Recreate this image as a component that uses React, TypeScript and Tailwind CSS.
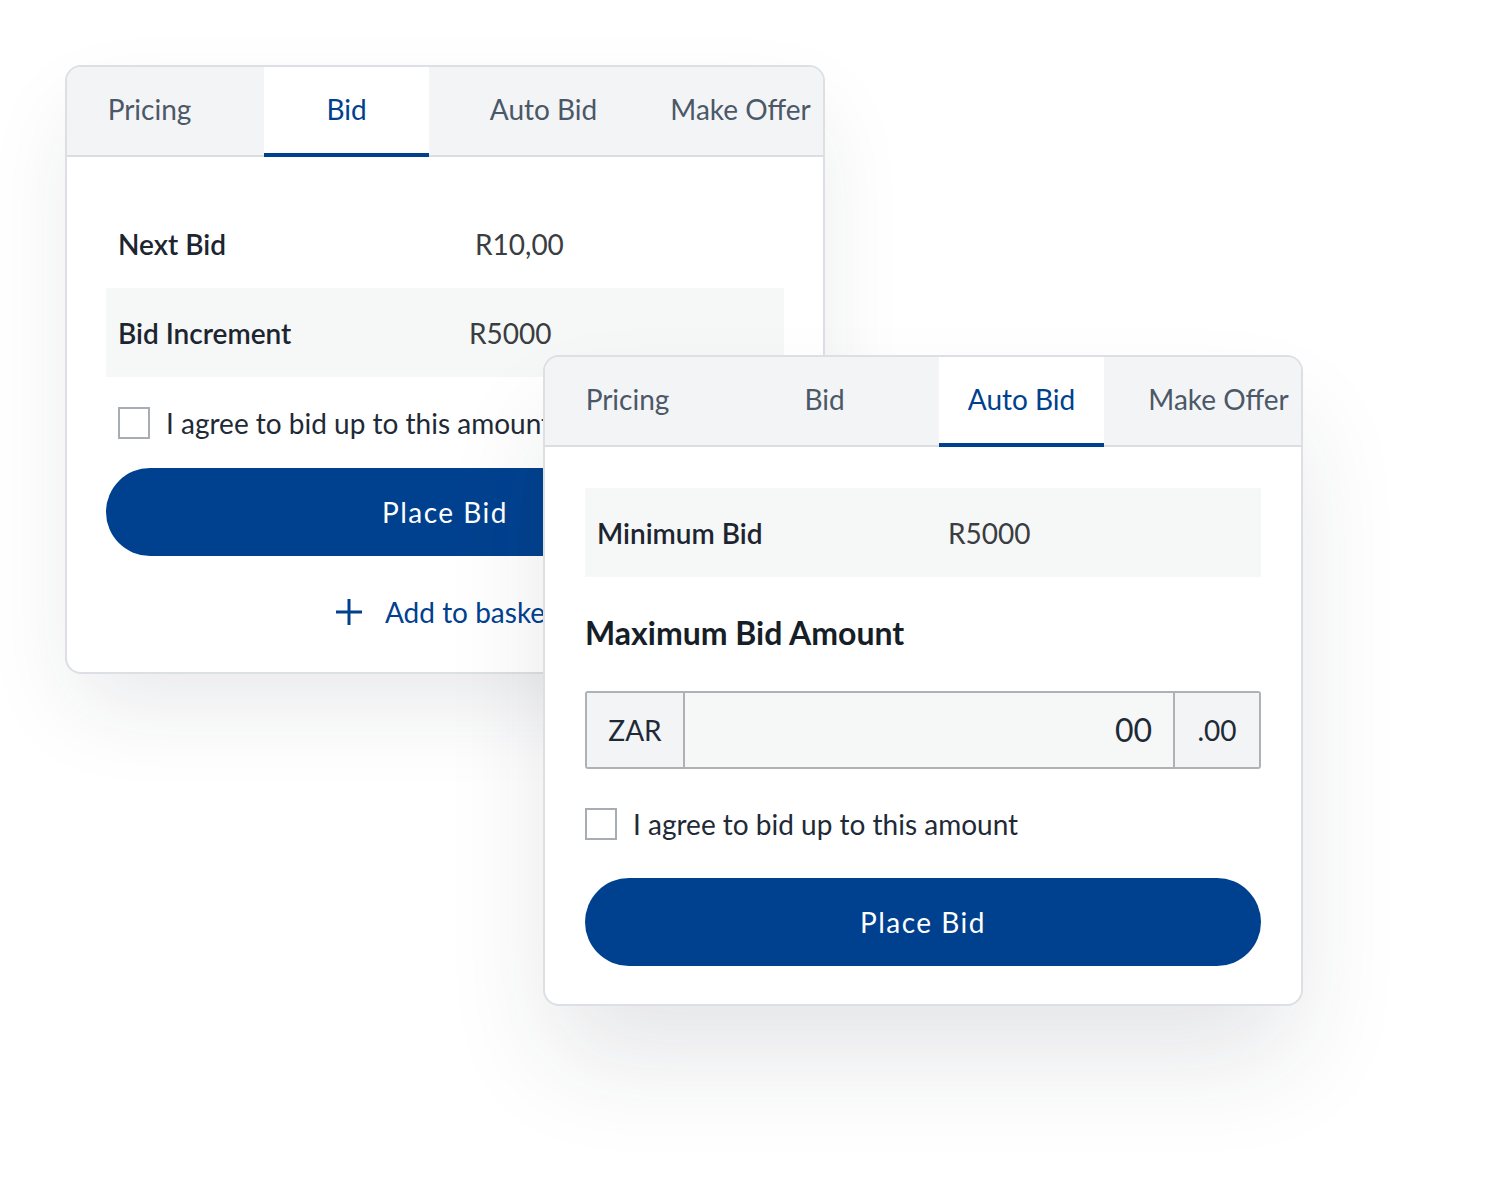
import { useState } from "react";

const TABS = ["Pricing", "Bid", "Auto Bid", "Make Offer"];

function Tabs({ active }: { active: string }) {
  return (
    <div className="flex h-[90px] justify-between rounded-t-[14px] border-b-2 border-[#dadde1] bg-[#f3f4f6]">
      {TABS.map((t) => (
        <div
          key={t}
          className={
            t === active
              ? "relative flex w-[165px] items-center justify-center bg-white pb-[4px] text-[28px] text-[#00418f]"
              : "flex w-[165px] items-center justify-center pb-[4px] text-[28px] text-[#4b5867]"
          }
        >
          {t}
          {t === active && (
            <span className="absolute bottom-[-2px] left-0 right-0 h-1 bg-[#00418f]" />
          )}
        </div>
      ))}
    </div>
  );
}

function Row({
  label,
  value,
  shaded,
  valueOffset = 0,
}: {
  label: string;
  value: string;
  shaded?: boolean;
  valueOffset?: number;
}) {
  return (
    <div
      className={
        shaded
          ? "flex h-[89px] items-center bg-[#f6f7f7] pl-[12px] text-[28px]"
          : "flex h-[89px] items-center pl-[12px] text-[28px]"
      }
    >
      <span className="w-[351px] shrink-0 font-semibold text-[#1c2530]">{label}</span>
      <span className="text-[#3a3d41]" style={{ marginLeft: valueOffset }}>
        {value}
      </span>
    </div>
  );
}

function Agree() {
  const [on, setOn] = useState(false);
  return (
    <label className="flex h-8 items-center gap-4 text-[28px] leading-8 text-[#1f2a37]">
      <button
        type="button"
        onClick={() => setOn(!on)}
        className={
          on
            ? "h-8 w-8 shrink-0 border-2 border-[#00418f] bg-[#00418f]"
            : "h-8 w-8 shrink-0 border-2 border-[#a7adb3] bg-white"
        }
      />
      <span className="whitespace-nowrap">I agree to bid up to this amount</span>
    </label>
  );
}

function PlaceBid() {
  return (
    <button
      type="button"
      className="flex h-[88px] w-full items-center justify-center rounded-full bg-[#00418f] text-[28px] tracking-[1.5px] text-white"
    >
      Place Bid
    </button>
  );
}

function BidCard() {
  return (
    <div className="absolute left-[65px] top-[65px] w-[760px] overflow-hidden rounded-[16px] border-2 border-[#dcdfe3] bg-white shadow-[0_40px_90px_-10px_rgba(30,41,59,0.10)]">
      <Tabs active="Bid" />
      <div className="flex flex-col px-[39px] pb-[44px] pt-[42px]">
        <Row label="Next Bid" value="R10,00" valueOffset={6} />
        <Row label="Bid Increment" value="R5000" shaded />
        <div className="mt-[30px] pl-[12px]">
          <Agree />
        </div>
        <div className="mt-[29px]">
          <PlaceBid />
        </div>
        <button
          type="button"
          className="mt-[40px] flex h-8 items-center justify-center gap-[22px] text-[28px] leading-8 text-[#00418f]"
        >
          <svg width="28" height="28" viewBox="0 0 28 28" fill="none">
            <path d="M14 1v26M1 14h26" stroke="#00418f" strokeWidth="3" />
          </svg>
          Add to basket
        </button>
      </div>
    </div>
  );
}

function AutoBidCard() {
  return (
    <div className="absolute left-[543px] top-[355px] w-[760px] overflow-hidden rounded-[16px] border-2 border-[#dcdfe3] bg-white shadow-[0_60px_110px_-10px_rgba(30,41,59,0.12)]">
      <Tabs active="Auto Bid" />
      <div className="flex flex-col px-[40px] pb-[38px] pt-[41px]">
        <Row label="Minimum Bid" value="R5000" shaded />
        <h3 className="mt-[36px] text-[32px] font-bold leading-[40px] text-[#161e28]">
          Maximum Bid Amount
        </h3>
        <div className="mt-[38px] flex h-[78px] overflow-hidden rounded-[3px] border-2 border-[#aeb2b6] bg-[#f6f7f7] text-[28px] text-[#1f2a37]">
          <div className="flex w-[98px] items-center justify-center border-r-2 border-[#aeb2b6] bg-[#f3f4f6]">
            ZAR
          </div>
          <div className="flex flex-1 items-center justify-end pr-[21px] text-[32px]">00</div>
          <div className="flex w-[86px] items-center justify-center border-l-2 border-[#aeb2b6] bg-[#f3f4f6]">
            .00
          </div>
        </div>
        <div className="mt-[39px]">
          <Agree />
        </div>
        <div className="mt-[38px]">
          <PlaceBid />
        </div>
      </div>
    </div>
  );
}

export default function App() {
  return (
    <div
      className="relative h-[1201px] w-[1496px] overflow-hidden bg-white"
      style={{ fontFamily: "Lato, 'Open Sans', sans-serif" }}
    >
      <BidCard />
      <AutoBidCard />
    </div>
  );
}
